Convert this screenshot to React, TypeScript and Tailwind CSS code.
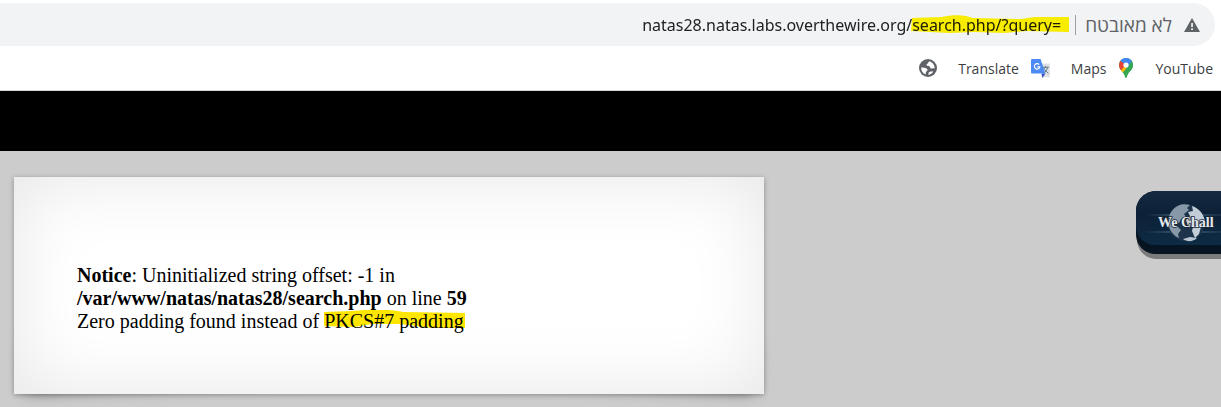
import type { ReactNode } from "react";

function WarningIcon() {
  return (
    <svg viewBox="0 0 16 14" className="h-[14px] w-4 shrink-0" aria-hidden="true">
      <path d="M8 0 16 14H0Z" fill="#5f6368" />
      <path d="M7.2 5h1.7v4H7.2zM7.2 10.3h1.7V12H7.2z" fill="#f1f3f4" />
    </svg>
  );
}

function GlobeIcon() {
  return (
    <svg viewBox="0 0 18 18" className="size-[18px]" aria-hidden="true">
      <circle cx="9" cy="9" r="9" fill="#5f6368" />
      <path
        d="M10.4 2.2C9 3 9.4 4.2 8.4 4.8 7.4 5.2 7.5 6 7.7 6.5 8.8 7 9.8 6.8 10.6 7.5 11.3 8.2 11.2 9.2 12.2 9.5 13.6 9.8 14.6 9.2 15.8 9.4 15.4 5.6 13.6 3.2 10.4 2.2Z"
        fill="#fff"
      />
      <path
        d="M2.2 8.6C4 8.6 6.4 8.6 7.8 9.8 8.8 10.8 8.8 11.6 7.9 12.1 6.6 12.7 7 14 6.6 15.4 3.6 14.4 2 11.6 2.2 8.6Z"
        fill="#fff"
      />
      <path d="M11.5 12.6 14.4 12.4C13.2 14.4 11.4 15.6 9.2 15.8 9.5 14 9.9 13 11.5 12.6Z" fill="#fff" />
    </svg>
  );
}

function TranslateIcon() {
  return (
    <svg viewBox="0 0 19 19" className="size-[19px]" aria-hidden="true">
      <path d="M8 4.4h9.6c.8 0 1.4.5 1.4 1.3v11.2c0 .8-.6 1.3-1.4 1.3H11Z" fill="#dfe1e5" />
      <path d="M10.5 14.5h4L11.4 19Z" fill="#3a4fc0" />
      <path d="M1.3 0h8.3l4.8 14.6H1.3C.5 14.6 0 14 0 13.3V1.3C0 .5.5 0 1.3 0Z" fill="#4c8bf5" />
      <path d="M8.2 5.6A2.7 2.7 0 1 0 8.8 7.8H6.3" fill="none" stroke="#fff" strokeWidth="1.2" />
      <path
        d="M11.8 8.3h6M14.7 6.8v1.5M16.6 8.5C16 11 14.6 12.8 13 13.8M13 8.8c.8 2.2 2.4 4.2 4.4 5.4"
        fill="none"
        stroke="#5f7c8a"
        strokeWidth="1"
      />
    </svg>
  );
}

function MapsIcon() {
  return (
    <svg viewBox="0 0 14 20" className="h-5 w-4" aria-hidden="true">
      <defs>
        <clipPath id="pin">
          <path d="M7 0a7 7 0 0 1 7 7c0 5-5 7-6.2 12.2-.2 1.1-1.4 1.1-1.6 0C5 14 0 12 0 7a7 7 0 0 1 7-7Z" />
        </clipPath>
      </defs>
      <g clipPath="url(#pin)">
        <path d="M0 0h14v20H0z" fill="#34a853" />
        <path d="M0 0h14v4L7 7 1 2Z" fill="#4285f4" />
        <path d="M0 0 1.6 2.5 7 7 1.6 13 0 10Z" fill="#ea4335" />
        <path d="M7 7 1.2 13 3 15.4 12 5Z" fill="#fbbc04" />
        <path d="M1.4 3 3.2 1 14 0V4L8 11 7 7Z" fill="#4285f4" />
        <path d="M12.5 2.5 14 5V12L7 14 8.6 9.5Z" fill="#34a853" />
      </g>
      <circle cx="7" cy="7" r="2.6" fill="#fff" />
    </svg>
  );
}

function Bookmark({ label, name, children }: { label?: string; name: string; children?: ReactNode }) {
  return (
    <a href="#" aria-label={name} className="flex items-center gap-3">
      {label && <span>{label}</span>}
      {children}
    </a>
  );
}

function AddressBar() {
  return (
    <div className="mt-[3px] mr-[6px] flex h-[43px] items-center rounded-r-full bg-[#f1f3f4] pr-[15px]">
      <div className="relative isolate mr-[6px] flex flex-1">
        <input
          type="text"
          aria-label="URL"
          defaultValue="natas28.natas.labs.overthewire.org/search.php/?query="
          className="w-full bg-transparent pr-2 text-right font-['Noto_Sans',sans-serif] text-[16px] leading-6 text-[#202124] outline-none"
        />
        <svg
          viewBox="0 0 164 20"
          preserveAspectRatio="none"
          className="pointer-events-none absolute top-[2px] right-0 h-5 w-[158px] mix-blend-multiply"
          aria-hidden="true"
        >
          <path
            d="M1 3 32 2C44-1 58 0 64 3L114 4 128 2H164V17L120 16 96 18 66 17 40 18 0 16Z"
            fill="#f8ec00"
          />
        </svg>
      </div>
      <div className="mr-[9px] h-5 w-px bg-[#9aa0a6]" />
      <span dir="rtl" className="mr-3 text-[19px] leading-6 text-[#5f6368]">
        לא מאובטח
      </span>
      <WarningIcon />
    </div>
  );
}

function WeChallBadge() {
  return (
    <a href="#" aria-label="We Chall" className="mt-10 block shrink-0">
      <svg viewBox="0 0 85 68" className="h-[68px] w-[85px]" aria-hidden="true">
        <defs>
          <linearGradient id="face" x1="0" y1="0" x2="0" y2="1">
            <stop offset="0" stopColor="#142a40" />
            <stop offset="0.45" stopColor="#0c2136" />
            <stop offset="1" stopColor="#0e2b45" />
          </linearGradient>
          <linearGradient id="glow" gradientUnits="userSpaceOnUse" x1="8" y1="0" x2="85" y2="0">
            <stop offset="0" stopColor="#5d7f9f" stopOpacity="0" />
            <stop offset="0.5" stopColor="#7f9ebb" />
            <stop offset="1" stopColor="#5d7f9f" stopOpacity="0.3" />
          </linearGradient>
        </defs>
        <path d="M85 24H1v24c0 12 9 20 20 20h64Z" fill="#7b7b7b" />
        <path d="M85 0H20C9 0 0 9 0 20v23c0 12 9 20 20 20h65Z" fill="#071522" />
        <path d="M85 0H20C9 0 0 9 0 20v14c0 12 9 20 20 20h65Z" fill="url(#face)" />
        <path d="M8 23h77v2H8zM8 40h77v2H8z" fill="url(#glow)" opacity="0.5" />
        <circle cx="50" cy="32" r="18.5" fill="#1d344b" />
        <path
          d="M35 21C40 14 46 12 54 14L51 17 53 19 48 23 50 26 45 28 43 32 39 30 36 33 41 35 45 39 42 43 43 47C34 43 29 32 35 21Z"
          fill="#8798a8"
        />
        <path
          d="M56 15C63 17 69 24 69 32L65 36 63 43 59 47 56 40 57 36 52 35 50 29 54 25 52 21 57 20Z"
          fill="#c2cdd8"
        />
        <path d="M47 48 54 46 61 47C57 51 51 51 47 48Z" fill="#b7c4d0" />
        <text
          x="22"
          y="36"
          fill="#e4e9ef"
          stroke="#172635"
          strokeWidth="1.5"
          paintOrder="stroke"
          className="font-['Liberation_Serif',serif] text-[14px] font-bold"
        >
          We Chall
        </text>
      </svg>
    </a>
  );
}

function NoticeCard() {
  return (
    <main className="relative isolate mt-[26px] ml-[14px] w-full max-w-[750px]">
      <div className="absolute bottom-[12px] left-[12px] -z-10 h-1/5 w-1/2 origin-bottom-left -rotate-3 shadow-[0_10px_15px_rgba(0,0,0,0.5)]" />
      <div className="absolute right-[12px] bottom-[12px] -z-10 h-1/5 w-1/2 origin-bottom-right rotate-3 shadow-[0_10px_15px_rgba(0,0,0,0.5)]" />
      <div className="bg-white px-[63px] pt-[87px] pb-[61px] font-['Liberation_Serif',serif] text-[20px] leading-[23px] text-black shadow-[0_1px_5px_rgba(0,0,0,0.3),inset_0_0_75px_rgba(0,0,0,0.1)]">
        <p>
          <b>Notice</b>: Uninitialized string offset: -1 in
          <br />
          <b>/var/www/natas/natas28/search.php</b> on line <b>59</b>
          <br />
          Zero padding found instead of{" "}
          <span className="relative isolate inline-block">
            <svg
              viewBox="0 0 141 20"
              preserveAspectRatio="none"
              className="absolute top-0 left-0 -z-10 h-5 w-[141px]"
              aria-hidden="true"
            >
              <path d="M0 2 28 1C48-1 64-1 80 2L141 3V18L108 18 76 14 48 14 30 17 0 16Z" fill="#ffe600" />
            </svg>
            PKCS#7 padding
          </span>
        </p>
      </div>
    </main>
  );
}

export default function App() {
  return (
    <div className="flex min-h-screen flex-col overflow-hidden bg-white font-['Open_Sans','Noto_Sans',sans-serif]">
      <AddressBar />
      <nav className="flex h-[45px] items-center justify-end gap-[21px] border-b border-[#d5d7da] pr-2 text-[14px] text-[#3c4043]">
        <Bookmark name="Website">
          <GlobeIcon />
        </Bookmark>
        <Bookmark name="Translate" label="Translate">
          <TranslateIcon />
        </Bookmark>
        <Bookmark name="Maps" label="Maps">
          <MapsIcon />
        </Bookmark>
        <Bookmark name="YouTube" label="YouTube" />
      </nav>
      <header className="h-[60px] bg-black" />
      <div className="flex flex-1 items-start justify-between bg-[#ccc] pb-[13px]">
        <NoticeCard />
        <WeChallBadge />
      </div>
    </div>
  );
}
